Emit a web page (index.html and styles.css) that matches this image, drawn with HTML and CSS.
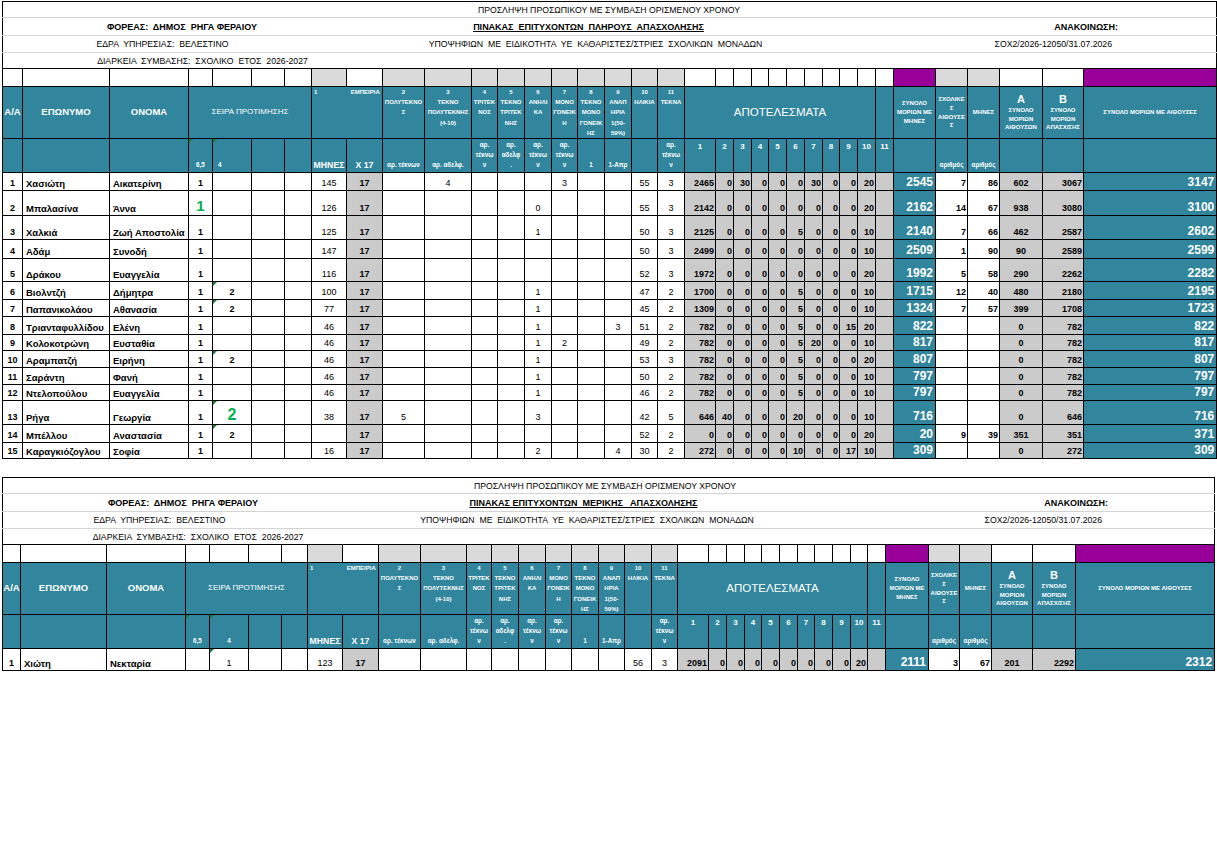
FILE: index.html
```html
<!DOCTYPE html>
<html lang="el">
<head>
<meta charset="utf-8">
<title>Πίνακας επιτυχόντων</title>
<link rel="stylesheet" href="styles.css">
</head>
<body>
<table class="sheet t1">
<colgroup>
<col class="w20"><col class="w87"><col class="w79"><col class="w24"><col class="w39"><col class="w33"><col class="w27"><col class="w35"><col class="w36"><col class="w42"><col class="w47"><col class="w26"><col class="w27"><col class="w27"><col class="w26"><col class="w27"><col class="w27"><col class="w26"><col class="w27"><col class="w31"><col class="w18"><col class="w18"><col class="w17"><col class="w18"><col class="w18"><col class="w18"><col class="w17"><col class="w18"><col class="w18"><col class="w18"><col class="w42"><col class="w32"><col class="w32"><col class="w43"><col class="w41"><col class="w133">
</colgroup>
<tr class="hA first"><td colspan="36" class="ttl"><div class="tz gA"><span class="c">ΠΡΟΣΛΗΨΗ ΠΡΟΣΩΠΙΚΟΥ ΜΕ ΣΥΜΒΑΣΗ ΟΡΙΣΜΕΝΟΥ ΧΡΟΝΟΥ</span></div></td></tr>
<tr class="hB"><td colspan="36" class="ttl"><div class="tz gB"><span class="c b">ΦΟΡΕΑΣ:  ΔΗΜΟΣ  ΡΗΓΑ ΦΕΡΑΙΟΥ</span><span class="c b u">ΠΙΝΑΚΑΣ  ΕΠΙΤΥΧΟΝΤΩΝ  ΠΛΗΡΟΥΣ  ΑΠΑΣΧΟΛΗΣΗΣ</span><span class="r b">ΑΝΑΚΟΙΝΩΣΗ:</span></div></td></tr>
<tr class="hC"><td colspan="36" class="ttl"><div class="tz gC"><span class="c">ΕΔΡΑ  ΥΠΗΡΕΣΙΑΣ:  ΒΕΛΕΣΤΙΝΟ</span><span class="c">ΥΠΟΨΗΦΙΩΝ  ΜΕ  ΕΙΔΙΚΟΤΗΤΑ  ΥΕ  ΚΑΘΑΡΙΣΤΕΣ/ΣΤΡΙΕΣ  ΣΧΟΛΙΚΩΝ  ΜΟΝΑΔΩΝ</span><span class="r">ΣΟΧ2/2026-12050/31.07.2026</span></div></td></tr>
<tr class="hD last"><td colspan="36" class="ttl"><div class="tz gD"><span class="c">ΔΙΑΡΚΕΙΑ  ΣΥΜΒΑΣΗΣ:  ΣΧΟΛΙΚΟ  ΕΤΟΣ  2026-2027</span></div></td></tr>
<tr class="hE re"><td></td><td></td><td></td><td></td><td></td><td></td><td></td><td></td><td></td><td></td><td></td><td></td><td></td><td></td><td></td><td></td><td></td><td></td><td></td><td></td><td></td><td></td><td></td><td></td><td></td><td></td><td></td><td></td><td></td><td></td><td></td><td></td><td></td><td></td><td></td><td></td></tr>
<tr class="hH">
<td class="mid big9">Α/Α</td><td class="mid big9">ΕΠΩΝΥΜΟ</td><td class="mid big9">ΟΝΟΜΑ</td>
<td colspan="4" class="mid reg8">ΣΕΙΡΑ ΠΡΟΤΙΜΗΣΗΣ</td>
<td class="lft nbr">1</td><td class="emp">ΕΜΠΕΙΡΙΑ</td>
<td>2<br>ΠΟΛΥΤΕΚΝΟ<br>Σ</td><td>3<br>ΤΕΚΝΟ<br>ΠΟΛΥΤΕΚΝΗΣ<br>(4-10)</td><td>4<br>ΤΡΙΤΕΚ<br>ΝΟΣ</td><td>5<br>ΤΕΚΝΟ<br>ΤΡΙΤΕΚ<br>ΝΗΣ</td><td>6<br>ΑΝΗΛΙ<br>ΚΑ</td><td>7<br>ΜΟΝΟ<br>ΓΟΝΕΙΚ<br>Η</td><td>8<br>ΤΕΚΝΟ<br>ΜΟΝΟ<br>ΓΟΝΕΙΚ<br>ΗΣ</td><td>9<br>ΑΝΑΠ<br>ΗΡΙΑ<br>1(50-<br>59%)</td><td>10<br>ΗΛΙΚΙΑ</td><td>11<br>ΤΕΚΝΑ</td>
<td colspan="10" class="mid apo">ΑΠΟΤΕΛΕΣΜΑΤΑ</td><td></td>
<td class="mid tight">ΣΥΝΟΛΟ<br>ΜΟΡΙΩΝ ΜΕ<br>ΜΗΝΕΣ</td><td class="mid tight">ΣΧΟΛΙΚΕ<br>Σ<br>ΑΙΘΟΥΣΕ<br>Σ</td><td class="mid tight">ΜΗΝΕΣ</td>
<td class="mid tight"><span class="ab">Α</span><br>ΣΥΝΟΛΟ<br>ΜΟΡΙΩΝ<br>ΑΙΘΟΥΣΩΝ</td><td class="mid tight"><span class="ab">Β</span><br>ΣΥΝΟΛΟ<br>ΜΟΡΙΩΝ<br>ΑΠΑΣΧ/ΣΗΣ</td>
<td class="mid">ΣΥΝΟΛΟ ΜΟΡΙΩΝ ΜΕ ΑΙΘΟΥΣΕΣ</td>
</tr>
<tr class="hS">
<td></td><td></td><td></td><td class="tri">6,5</td><td class="tri four">4</td><td></td><td></td>
<td class="s9">ΜΗΝΕΣ</td><td class="s9">X 17</td><td>αρ. τέκνων</td><td>αρ. αδελφ.</td>
<td>αρ.<br>τέκνω<br>ν</td><td>αρ.<br>αδελφ<br>.</td><td>αρ.<br>τέκνω<br>ν</td><td>αρ.<br>τέκνω<br>ν</td><td>1</td><td>1-Απρ</td><td></td><td>αρ.<br>τέκνω<br>ν</td>
<td class="rn">1</td><td class="rn">2</td><td class="rn">3</td><td class="rn">4</td><td class="rn">5</td><td class="rn">6</td><td class="rn">7</td><td class="rn">8</td><td class="rn">9</td><td class="rn">10</td><td class="rn">11</td>
<td></td><td>αριθμός</td><td>αριθμός</td><td></td><td></td><td></td>
</tr>
<tr class="dr h18"><td>1</td><td>Χασιώτη</td><td>Αικατερίνη</td><td>1</td><td></td><td></td><td></td><td>145</td><td>17</td><td></td><td>4</td><td></td><td></td><td></td><td>3</td><td></td><td></td><td>55</td><td>3</td><td>2465</td><td>0</td><td>30</td><td>0</td><td>0</td><td>0</td><td>30</td><td>0</td><td>0</td><td>20</td><td></td><td>2545</td><td>7</td><td>86</td><td>602</td><td>3067</td><td>3147</td></tr>
<tr class="dr h25"><td>2</td><td>Μπαλασίνα</td><td>Άννα</td><td class="gn g1">1</td><td></td><td></td><td></td><td>126</td><td>17</td><td></td><td></td><td></td><td></td><td>0</td><td></td><td></td><td></td><td>55</td><td>3</td><td>2142</td><td>0</td><td>0</td><td>0</td><td>0</td><td>0</td><td>0</td><td>0</td><td>0</td><td>20</td><td></td><td>2162</td><td>14</td><td>67</td><td>938</td><td>3080</td><td>3100</td></tr>
<tr class="dr h24"><td>3</td><td>Χαλκιά</td><td>Ζωή Αποστολία</td><td>1</td><td></td><td></td><td></td><td>125</td><td>17</td><td></td><td></td><td></td><td></td><td>1</td><td></td><td></td><td></td><td>50</td><td>3</td><td>2125</td><td>0</td><td>0</td><td>0</td><td>0</td><td>5</td><td>0</td><td>0</td><td>0</td><td>10</td><td></td><td>2140</td><td>7</td><td>66</td><td>462</td><td>2587</td><td>2602</td></tr>
<tr class="dr h19"><td>4</td><td>Αδάμ</td><td>Συνοδή</td><td>1</td><td></td><td></td><td></td><td>147</td><td>17</td><td></td><td></td><td></td><td></td><td></td><td></td><td></td><td></td><td>50</td><td>3</td><td>2499</td><td>0</td><td>0</td><td>0</td><td>0</td><td>0</td><td>0</td><td>0</td><td>0</td><td>10</td><td></td><td>2509</td><td>1</td><td>90</td><td>90</td><td>2589</td><td>2599</td></tr>
<tr class="dr h23"><td>5</td><td>Δράκου</td><td>Ευαγγελία</td><td>1</td><td></td><td></td><td></td><td>116</td><td>17</td><td></td><td></td><td></td><td></td><td></td><td></td><td></td><td></td><td>52</td><td>3</td><td>1972</td><td>0</td><td>0</td><td>0</td><td>0</td><td>0</td><td>0</td><td>0</td><td>0</td><td>20</td><td></td><td>1992</td><td>5</td><td>58</td><td>290</td><td>2262</td><td>2282</td></tr>
<tr class="dr h18"><td>6</td><td>Βιολντζή</td><td>Δήμητρα</td><td>1</td><td class="tri">2</td><td></td><td></td><td>100</td><td>17</td><td></td><td></td><td></td><td></td><td>1</td><td></td><td></td><td></td><td>47</td><td>2</td><td>1700</td><td>0</td><td>0</td><td>0</td><td>0</td><td>5</td><td>0</td><td>0</td><td>0</td><td>10</td><td></td><td>1715</td><td>12</td><td>40</td><td>480</td><td>2180</td><td>2195</td></tr>
<tr class="dr h17"><td>7</td><td>Παπανικολάου</td><td>Αθανασία</td><td>1</td><td class="tri">2</td><td></td><td></td><td>77</td><td>17</td><td></td><td></td><td></td><td></td><td>1</td><td></td><td></td><td></td><td>45</td><td>2</td><td>1309</td><td>0</td><td>0</td><td>0</td><td>0</td><td>5</td><td>0</td><td>0</td><td>0</td><td>10</td><td></td><td>1324</td><td>7</td><td>57</td><td>399</td><td>1708</td><td>1723</td></tr>
<tr class="dr h18"><td>8</td><td>Τριανταφυλλίδου</td><td>Ελένη</td><td>1</td><td></td><td></td><td></td><td>46</td><td>17</td><td></td><td></td><td></td><td></td><td>1</td><td></td><td></td><td>3</td><td>51</td><td>2</td><td>782</td><td>0</td><td>0</td><td>0</td><td>0</td><td>5</td><td>0</td><td>0</td><td>15</td><td>20</td><td></td><td>822</td><td></td><td></td><td>0</td><td>782</td><td>822</td></tr>
<tr class="dr h16"><td>9</td><td>Κολοκοτρώνη</td><td>Ευσταθία</td><td>1</td><td></td><td></td><td></td><td>46</td><td>17</td><td></td><td></td><td></td><td></td><td>1</td><td>2</td><td></td><td></td><td>49</td><td>2</td><td>782</td><td>0</td><td>0</td><td>0</td><td>0</td><td>5</td><td>20</td><td>0</td><td>0</td><td>10</td><td></td><td>817</td><td></td><td></td><td>0</td><td>782</td><td>817</td></tr>
<tr class="dr h17"><td>10</td><td>Αραμπατζή</td><td>Ειρήνη</td><td>1</td><td class="tri">2</td><td></td><td></td><td>46</td><td>17</td><td></td><td></td><td></td><td></td><td>1</td><td></td><td></td><td></td><td>53</td><td>3</td><td>782</td><td>0</td><td>0</td><td>0</td><td>0</td><td>5</td><td>0</td><td>0</td><td>0</td><td>20</td><td></td><td>807</td><td></td><td></td><td>0</td><td>782</td><td>807</td></tr>
<tr class="dr h17"><td>11</td><td>Σαράντη</td><td>Φανή</td><td>1</td><td></td><td></td><td></td><td>46</td><td>17</td><td></td><td></td><td></td><td></td><td>1</td><td></td><td></td><td></td><td>50</td><td>2</td><td>782</td><td>0</td><td>0</td><td>0</td><td>0</td><td>5</td><td>0</td><td>0</td><td>0</td><td>10</td><td></td><td>797</td><td></td><td></td><td>0</td><td>782</td><td>797</td></tr>
<tr class="dr h16"><td>12</td><td>Ντελοπούλου</td><td>Ευαγγελία</td><td>1</td><td></td><td></td><td></td><td>46</td><td>17</td><td></td><td></td><td></td><td></td><td>1</td><td></td><td></td><td></td><td>46</td><td>2</td><td>782</td><td>0</td><td>0</td><td>0</td><td>0</td><td>5</td><td>0</td><td>0</td><td>0</td><td>10</td><td></td><td>797</td><td></td><td></td><td>0</td><td>782</td><td>797</td></tr>
<tr class="dr h24"><td>13</td><td>Ρήγα</td><td>Γεωργία</td><td>1</td><td class="tri gn g2">2</td><td></td><td></td><td>38</td><td>17</td><td>5</td><td></td><td></td><td></td><td>3</td><td></td><td></td><td></td><td>42</td><td>5</td><td>646</td><td>40</td><td>0</td><td>0</td><td>0</td><td>20</td><td>0</td><td>0</td><td>0</td><td>10</td><td></td><td>716</td><td></td><td></td><td>0</td><td>646</td><td>716</td></tr>
<tr class="dr h18"><td>14</td><td>Μπέλλου</td><td>Αναστασία</td><td>1</td><td class="tri">2</td><td></td><td></td><td></td><td>17</td><td></td><td></td><td></td><td></td><td></td><td></td><td></td><td></td><td>52</td><td>2</td><td>0</td><td>0</td><td>0</td><td>0</td><td>0</td><td>0</td><td>0</td><td>0</td><td>0</td><td>20</td><td></td><td>20</td><td>9</td><td>39</td><td>351</td><td>351</td><td>371</td></tr>
<tr class="dr h16"><td>15</td><td>Καραγκιόζογλου</td><td>Σοφία</td><td>1</td><td></td><td></td><td></td><td>16</td><td>17</td><td></td><td></td><td></td><td></td><td>2</td><td></td><td></td><td>4</td><td>30</td><td>2</td><td>272</td><td>0</td><td>0</td><td>0</td><td>0</td><td>10</td><td>0</td><td>0</td><td>17</td><td>10</td><td></td><td>309</td><td></td><td></td><td>0</td><td>272</td><td>309</td></tr>
</table>

<table class="sheet t2">
<colgroup>
<col class="w18"><col class="w86"><col class="w79"><col class="w24"><col class="w39"><col class="w33"><col class="w26"><col class="w35"><col class="w36"><col class="w42"><col class="w46"><col class="w25"><col class="w27"><col class="w27"><col class="w26"><col class="w27"><col class="w26"><col class="w27"><col class="w26"><col class="w31"><col class="w18"><col class="w18"><col class="w17"><col class="w18"><col class="w18"><col class="w17"><col class="w18"><col class="w18"><col class="w17"><col class="w18"><col class="w43"><col class="w31"><col class="w32"><col class="w41"><col class="w43"><col class="w139">
</colgroup>
<tr class="hA first"><td colspan="36" class="ttl"><div class="tz gA"><span class="c">ΠΡΟΣΛΗΨΗ ΠΡΟΣΩΠΙΚΟΥ ΜΕ ΣΥΜΒΑΣΗ ΟΡΙΣΜΕΝΟΥ ΧΡΟΝΟΥ</span></div></td></tr>
<tr class="hB"><td colspan="36" class="ttl"><div class="tz gB"><span class="c b">ΦΟΡΕΑΣ:  ΔΗΜΟΣ  ΡΗΓΑ ΦΕΡΑΙΟΥ</span><span class="c b u">ΠΙΝΑΚΑΣ ΕΠΙΤΥΧΟΝΤΩΝ  ΜΕΡΙΚΗΣ   ΑΠΑΣΧΟΛΗΣΗΣ</span><span class="r b">ΑΝΑΚΟΙΝΩΣΗ:</span></div></td></tr>
<tr class="hC"><td colspan="36" class="ttl"><div class="tz gC"><span class="c">ΕΔΡΑ  ΥΠΗΡΕΣΙΑΣ:  ΒΕΛΕΣΤΙΝΟ</span><span class="c">ΥΠΟΨΗΦΙΩΝ  ΜΕ  ΕΙΔΙΚΟΤΗΤΑ  ΥΕ  ΚΑΘΑΡΙΣΤΕΣ/ΣΤΡΙΕΣ  ΣΧΟΛΙΚΩΝ  ΜΟΝΑΔΩΝ</span><span class="r">ΣΟΧ2/2026-12050/31.07.2026</span></div></td></tr>
<tr class="hD last"><td colspan="36" class="ttl"><div class="tz gD"><span class="c">ΔΙΑΡΚΕΙΑ  ΣΥΜΒΑΣΗΣ:  ΣΧΟΛΙΚΟ  ΕΤΟΣ  2026-2027</span></div></td></tr>
<tr class="hE re"><td></td><td></td><td></td><td></td><td></td><td></td><td></td><td></td><td></td><td></td><td></td><td></td><td></td><td></td><td></td><td></td><td></td><td></td><td></td><td></td><td></td><td></td><td></td><td></td><td></td><td></td><td></td><td></td><td></td><td></td><td></td><td></td><td></td><td></td><td></td><td></td></tr>
<tr class="hH">
<td class="mid big9">Α/Α</td><td class="mid big9">ΕΠΩΝΥΜΟ</td><td class="mid big9">ΟΝΟΜΑ</td>
<td colspan="4" class="mid reg8">ΣΕΙΡΑ ΠΡΟΤΙΜΗΣΗΣ</td>
<td class="lft nbr">1</td><td class="emp">ΕΜΠΕΙΡΙΑ</td>
<td>2<br>ΠΟΛΥΤΕΚΝΟ<br>Σ</td><td>3<br>ΤΕΚΝΟ<br>ΠΟΛΥΤΕΚΝΗΣ<br>(4-10)</td><td>4<br>ΤΡΙΤΕΚ<br>ΝΟΣ</td><td>5<br>ΤΕΚΝΟ<br>ΤΡΙΤΕΚ<br>ΝΗΣ</td><td>6<br>ΑΝΗΛΙ<br>ΚΑ</td><td>7<br>ΜΟΝΟ<br>ΓΟΝΕΙΚ<br>Η</td><td>8<br>ΤΕΚΝΟ<br>ΜΟΝΟ<br>ΓΟΝΕΙΚ<br>ΗΣ</td><td>9<br>ΑΝΑΠ<br>ΗΡΙΑ<br>1(50-<br>59%)</td><td>10<br>ΗΛΙΚΙΑ</td><td>11<br>ΤΕΚΝΑ</td>
<td colspan="10" class="mid apo">ΑΠΟΤΕΛΕΣΜΑΤΑ</td><td></td>
<td class="mid tight">ΣΥΝΟΛΟ<br>ΜΟΡΙΩΝ ΜΕ<br>ΜΗΝΕΣ</td><td class="mid tight">ΣΧΟΛΙΚΕ<br>Σ<br>ΑΙΘΟΥΣΕ<br>Σ</td><td class="mid tight">ΜΗΝΕΣ</td>
<td class="mid tight"><span class="ab">Α</span><br>ΣΥΝΟΛΟ<br>ΜΟΡΙΩΝ<br>ΑΙΘΟΥΣΩΝ</td><td class="mid tight"><span class="ab">Β</span><br>ΣΥΝΟΛΟ<br>ΜΟΡΙΩΝ<br>ΑΠΑΣΧ/ΣΗΣ</td>
<td class="mid">ΣΥΝΟΛΟ ΜΟΡΙΩΝ ΜΕ ΑΙΘΟΥΣΕΣ</td>
</tr>
<tr class="hS">
<td></td><td></td><td></td><td class="tri">6,5</td><td class="tri">4</td><td></td><td></td>
<td class="s9">ΜΗΝΕΣ</td><td class="s9">X 17</td><td>αρ. τέκνων</td><td>αρ. αδελφ.</td>
<td>αρ.<br>τέκνω<br>ν</td><td>αρ.<br>αδελφ<br>.</td><td>αρ.<br>τέκνω<br>ν</td><td>αρ.<br>τέκνω<br>ν</td><td>1</td><td>1-Απρ</td><td></td><td>αρ.<br>τέκνω<br>ν</td>
<td class="rn">1</td><td class="rn">2</td><td class="rn">3</td><td class="rn">4</td><td class="rn">5</td><td class="rn">6</td><td class="rn">7</td><td class="rn">8</td><td class="rn">9</td><td class="rn">10</td><td class="rn">11</td>
<td></td><td>αριθμός</td><td>αριθμός</td><td></td><td></td><td></td>
</tr>
<tr class="dr h22"><td>1</td><td>Χιώτη</td><td>Νεκταρία</td><td></td><td class="tri rg">1</td><td></td><td></td><td>123</td><td>17</td><td></td><td></td><td></td><td></td><td></td><td></td><td></td><td></td><td>56</td><td>3</td><td>2091</td><td>0</td><td>0</td><td>0</td><td>0</td><td>0</td><td>0</td><td>0</td><td>0</td><td>20</td><td></td><td>2111</td><td>3</td><td>67</td><td>201</td><td>2292</td><td>2312</td></tr>
</table>
</body>
</html>
```

FILE: styles.css
```css
* { box-sizing: border-box; }
html, body { margin: 0; padding: 0; background: #fff; }
body {
  font-family: "Liberation Sans", Arial, sans-serif;
  color: #000;
  padding: 1px 0 0 2px;
}

.sheet { border-collapse: collapse; table-layout: fixed; }
.t1 { width: 1214px; }
.t2 { width: 1212px; margin-top: 18px; }

.w17 { width: 17px; } .w18 { width: 18px; } .w20 { width: 20px; } .w24 { width: 24px; }
.w25 { width: 25px; } .w26 { width: 26px; } .w27 { width: 27px; } .w31 { width: 31px; }
.w32 { width: 32px; } .w33 { width: 33px; } .w35 { width: 35px; } .w36 { width: 36px; }
.w39 { width: 39px; } .w41 { width: 41px; } .w42 { width: 42px; } .w43 { width: 43px; }
.w46 { width: 46px; } .w47 { width: 47px; } .w79 { width: 79px; } .w86 { width: 86px; }
.w87 { width: 87px; } .w133 { width: 133px; } .w139 { width: 139px; }

.sheet td {
  padding: 0;
  border: 1px solid #000;
  white-space: nowrap;
  font-size: 9px;
  line-height: 10px;
  vertical-align: bottom;
}

/* row heights */
.hA { height: 16px; } .hB { height: 18px; } .hC { height: 17px; } .hD { height: 16px; }
.hE { height: 18px; } .hH { height: 51px; } .hS { height: 34px; }
.h16 { height: 16px; } .h17 { height: 17px; } .h18 { height: 18px; } .h19 { height: 19px; }
.h22 { height: 22px; } .h23 { height: 23px; } .h24 { height: 24px; } .h25 { height: 25px; }

/* title rows */
.sheet td.ttl {
  border-top-color: #d4d4d4;
  border-bottom-color: #d4d4d4;
  vertical-align: middle;
}
.sheet tr.first td.ttl { border-top-color: #000; }
.sheet tr.last td.ttl { border-bottom-color: #000; }
.tz { display: grid; align-items: center; }
.tz span { white-space: pre; font-size: 8.7px; line-height: 12px; }
.tz .b { font-weight: bold; font-size: 9px; }
.tz .u { text-decoration: underline; }
.tz .c { text-align: center; }
.tz .r { text-align: right; }

.t1 .gA { grid-template-columns: 1212px; }
.t1 .gB { grid-template-columns: 358px 455px 302px; }
.t1 .gC { grid-template-columns: 319px 547px 243px; }
.t1 .gD { grid-template-columns: 399px; }
.t2 .gA { grid-template-columns: 1204px; }
.t2 .gB { grid-template-columns: 360px 441px 304px; }
.t2 .gC { grid-template-columns: 313px 542px 244px; }
.t2 .gD { grid-template-columns: 390px; }

/* empty bordered row above headers */
.re td { background: #fff; }
.re td:nth-child(8),
.re td:nth-child(n+10):nth-child(-n+19),
.re td:nth-child(32),
.re td:nth-child(33) { background: #dadada; }
.re td:nth-child(31),
.re td:nth-child(36) { background: #990099; }

/* header rows */
.hH td, .hS td {
  background: #31859c;
  color: #fff;
  font-weight: bold;
  text-align: center;
  font-size: 6px;
  line-height: 10.2px;
  vertical-align: top;
}
.hH td.mid { vertical-align: middle; }
.hH td.big9 { font-size: 9.5px; }
.hH td.reg8 { font-weight: normal; font-size: 8px; }
.hH td.apo { font-weight: normal; font-size: 11.5px; }
.hH td.tight { line-height: 8.8px; }
.hH td.lft { text-align: left; padding-left: 2px; }
.hH td.nbr { border-right: hidden; }
.hH td.emp { font-size: 6px; padding-left: 2px; }
.ab { font-size: 11px; line-height: 12px; }

.hS td { vertical-align: bottom; padding-bottom: 2px; font-size: 6.3px; line-height: 10px; }
.hS td.s9 { font-size: 8.7px; }
.hS td.rn { vertical-align: top; padding-top: 3px; padding-bottom: 0; font-size: 8px; }
.hS td.four { text-align: left; padding-left: 5px; }

/* green comment indicators */
td.tri { position: relative; }
td.tri::before {
  content: "";
  position: absolute;
  left: 0;
  top: 0;
  border-top: 4px solid #17803a;
  border-right: 4px solid transparent;
}

/* data rows */
.dr td { text-align: center; padding-bottom: 1px; line-height: 11px; font-size: 9px; }
.dr td:nth-child(1) { font-weight: bold; }
.dr td:nth-child(2),
.dr td:nth-child(3) { text-align: left; padding-left: 3px; font-weight: bold; font-size: 9.5px; }
.dr td:nth-child(4),
.dr td:nth-child(5) { font-weight: bold; }
.dr td:nth-child(9) { background: #cbcbcb; font-weight: bold; }
.dr td:nth-child(n+20):nth-child(-n+30) {
  background: #cbcbcb;
  text-align: right;
  font-weight: bold;
  padding-right: 1px;
}
.dr td:nth-child(31),
.dr td:nth-child(36) {
  background: #31859c;
  color: #fff;
  font-weight: bold;
  font-size: 12px;
  line-height: 13px;
  text-align: right;
  padding-right: 2px;
}
.dr td:nth-child(32),
.dr td:nth-child(33) { text-align: right; font-weight: bold; padding-right: 1px; }
.dr td:nth-child(34) { background: #cbcbcb; font-weight: bold; }
.dr td:nth-child(35) { background: #cbcbcb; font-weight: bold; text-align: right; padding-right: 1px; }
.dr td.rg { font-weight: normal; }
.dr td.gn { color: #00b050; font-weight: bold; }
.dr td.g1 { font-size: 15px; line-height: 16px; }
.dr td.g2 { font-size: 16px; line-height: 17px; }
```
